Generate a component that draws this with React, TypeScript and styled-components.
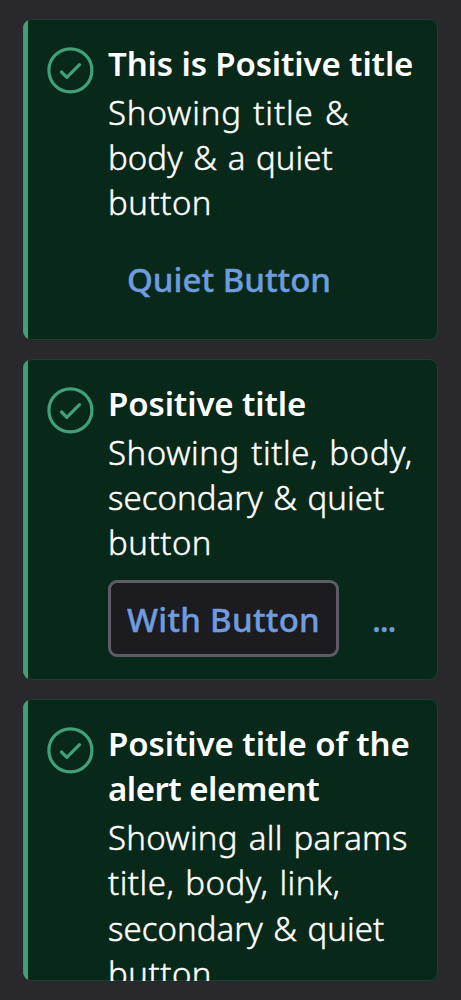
import React from "react";
import styled, { createGlobalStyle } from "styled-components";

const GlobalStyle = createGlobalStyle`
  * { box-sizing: border-box; }
  body { margin: 0; background: #29282d; overflow: hidden; }
`;

const Page = styled.main`
  display: flex;
  flex-direction: column;
  gap: 19px;
  height: 1000px;
  padding: 19px 23px 0;
  background: #29282d;
  color: #fff;
  font-family: "Noto Sans", "Open Sans", sans-serif;
`;

const Card = styled.section<{ $height: number }>`
  display: flex;
  flex: none;
  align-items: flex-start;
  gap: 14px;
  height: ${(p) => p.$height}px;
  padding: 22px 0 0 24px;
  overflow: hidden;
  background: linear-gradient(90deg, #40a179 5px, #08281a 5px);
  box-shadow: inset 0 0 0 1px rgba(56, 140, 105, 0.28);
  border-radius: 9px;
`;

const Icon = styled.svg`
  flex: none;
  width: 47px;
  height: 47px;
  margin-top: 6px;
  fill: none;
  stroke: #40a179;
  stroke-width: 3.2;
  stroke-linecap: round;
  stroke-linejoin: round;
`;

const Content = styled.div`
  flex: 1;
  min-width: 0;
`;

const Title = styled.h2`
  margin: 0 0 3.4px;
  font-size: 33px;
  font-weight: 600;
  line-height: 45.33px;
`;

const Body = styled.p`
  margin: 0;
  font-size: 33px;
  font-weight: 300;
  line-height: 45.33px;
  word-spacing: 2px;
  -webkit-text-stroke: 0.45px currentColor;
`;

const Line = styled.span<{ $tracking?: number }>`
  display: block;
  white-space: nowrap;
  letter-spacing: ${(p) => p.$tracking ?? 0}px;
`;

const Actions = styled.div`
  display: flex;
  align-items: center;
  gap: 14px;
  margin-top: 14.6px;
`;

const Button = styled.button<{ $secondary?: boolean }>`
  height: 77px;
  padding: 1px 16px 0;
  background: ${(p) => (p.$secondary ? "#1c1b1f" : "transparent")};
  border: 3px solid ${(p) => (p.$secondary ? "#5d5b64" : "transparent")};
  border-radius: 9px;
  color: #6f9bdf;
  font: 500 33px/45px "Noto Sans", "Open Sans", sans-serif;
  -webkit-text-stroke: 0.4px currentColor;
  white-space: nowrap;
`;

const CheckIcon = () => (
  <Icon viewBox="0 0 47 47" aria-hidden="true">
    <circle cx="23.4" cy="23.4" r="21.5" />
    <path d="M14.5 25 L19.8 30.3 L32.5 17.6" />
  </Icon>
);

type Text = [string, number?];
interface AlertProps {
  height: number;
  title: Text[];
  body: Text[];
  children?: React.ReactNode;
}

const lines = (items: Text[]) =>
  items.map(([text, tracking]) => (
    <Line key={text} $tracking={tracking}>{text}</Line>
  ));

const Alert = ({ height, title, body, children }: AlertProps) => (
  <Card $height={height}>
    <CheckIcon />
    <Content>
      <Title>{lines(title)}</Title>
      <Body>{lines(body)}</Body>
      {children && <Actions>{children}</Actions>}
    </Content>
  </Card>
);

export default function App() {
  return (
    <>
      <GlobalStyle />
      <Page>
        <Alert
          height={321}
          title={[["This is Positive title", -0.12]]}
          body={[["Showing title &", 0.85], ["body & a quiet", 0.05], ["button", 0.5]]}
        >
          <Button><Line>Quiet Button</Line></Button>
        </Alert>
        <Alert
          height={321}
          title={[["Positive title", -0.1]]}
          body={[["Showing title, body,", 0.58], ["secondary & quiet", 0.02], ["button", 0.5]]}
        >
          <Button $secondary><Line $tracking={0.25}>With Button</Line></Button>
          <Button><Line $tracking={-1.2}>...</Line></Button>
        </Alert>
        <Alert
          height={282}
          title={[["Positive title of the", -0.07], ["alert element", -0.5]]}
          body={[["Showing all params", 0.28], ["title, body, link,", 0.47], ["secondary & quiet", 0.02], ["button", 0.5]]}
        />
      </Page>
    </>
  );
}
